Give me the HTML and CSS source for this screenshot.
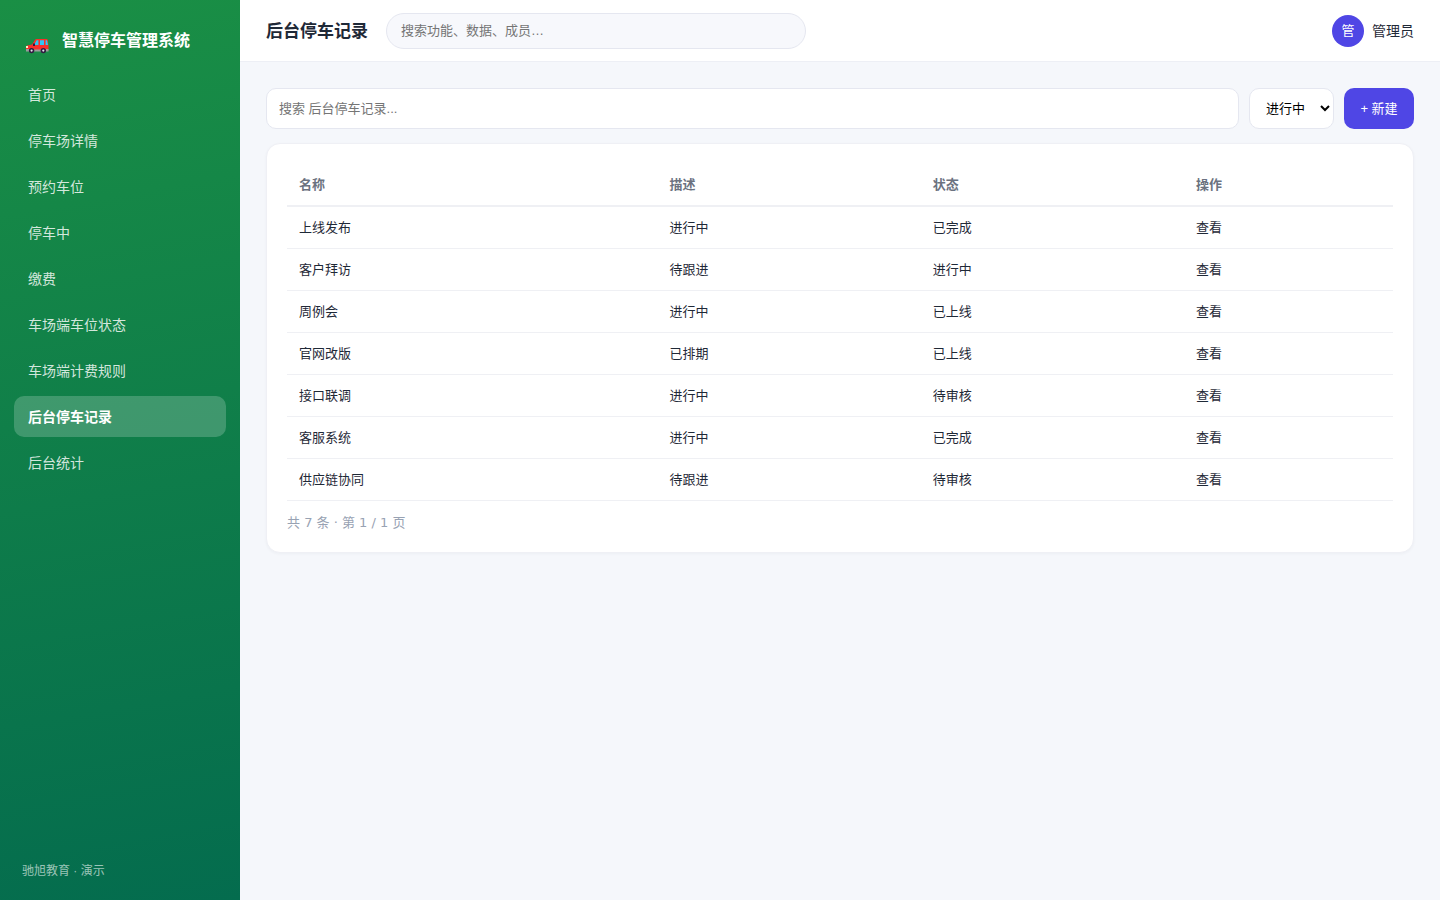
FILE: index.html
```html
<!DOCTYPE html>
<html lang="zh-CN">
<head>
<meta charset="utf-8">
<title>后台停车记录 - 智慧停车管理系统</title>
<link rel="stylesheet" href="styles.css">
</head>
<body>
<div class="app">
  <aside class="sidebar">
    <div class="brand">
      <svg class="brand-icon" viewBox="0 0 24 16" aria-hidden="true">
        <path fill="#f92f2b" d="M1 7.5 6 6.5 9 1.8Q9.6 1 10.5 1H20.5Q21.5 1 21.8 2L22.5 8V12.5H0V9Z"/>
        <path fill="#31c5f4" d="M8 7 10.6 2.2H12.4V7ZM14 2.2H18V7H14ZM19.6 2.2H21L22 7H19.6Z"/>
        <path fill="#9b9b9b" d="M0 11H3V13.5H0ZM8 11.5H15V13.5H8ZM20 11H22.5V13.5H20Z"/>
        <path fill="#321b41" d="M7 5.5H9V8H7Z"/>
        <path fill="#fff4c8" d="M0 8H2V10H0Z"/>
        <circle cx="5.6" cy="12.6" r="2.7" fill="#321b41"/>
        <circle cx="17.3" cy="12.6" r="2.7" fill="#321b41"/>
        <circle cx="5.6" cy="12.6" r="1.1" fill="#e4e4ea"/>
        <circle cx="17.3" cy="12.6" r="1.1" fill="#e4e4ea"/>
      </svg>
      <span>智慧停车管理系统</span>
    </div>
    <nav class="nav">
      <a class="nav-item" href="#">首页</a>
      <a class="nav-item" href="#">停车场详情</a>
      <a class="nav-item" href="#">预约车位</a>
      <a class="nav-item" href="#">停车中</a>
      <a class="nav-item" href="#">缴费</a>
      <a class="nav-item" href="#">车场端车位状态</a>
      <a class="nav-item" href="#">车场端计费规则</a>
      <a class="nav-item active" href="#" aria-current="page">后台停车记录</a>
      <a class="nav-item" href="#">后台统计</a>
    </nav>
    <div class="sidebar-foot">驰旭教育 · 演示</div>
  </aside>
  <div class="main">
    <header class="topbar">
      <h1 class="title">后台停车记录</h1>
      <input class="global-search" type="search" aria-label="全局搜索" placeholder="搜索功能、数据、成员…">
      <div class="user"><span class="avatar">管</span><span class="user-name">管理员</span></div>
    </header>
    <main class="content">
      <div class="toolbar">
        <input class="search" type="text" aria-label="搜索后台停车记录" placeholder="搜索 后台停车记录...">
        <select class="filter" aria-label="状态筛选">
          <option>进行中</option>
          <option>已完成</option>
        </select>
        <button class="create" type="button">+ 新建</button>
      </div>
      <section class="card">
        <table class="table">
          <colgroup><col class="col-name"><col class="col-mid"><col class="col-mid"><col></colgroup>
          <thead><tr><th>名称</th><th>描述</th><th>状态</th><th>操作</th></tr></thead>
          <tbody>
            <tr><td>上线发布</td><td>进行中</td><td>已完成</td><td>查看</td></tr>
            <tr><td>客户拜访</td><td>待跟进</td><td>进行中</td><td>查看</td></tr>
            <tr><td>周例会</td><td>进行中</td><td>已上线</td><td>查看</td></tr>
            <tr><td>官网改版</td><td>已排期</td><td>已上线</td><td>查看</td></tr>
            <tr><td>接口联调</td><td>进行中</td><td>待审核</td><td>查看</td></tr>
            <tr><td>客服系统</td><td>进行中</td><td>已完成</td><td>查看</td></tr>
            <tr><td>供应链协同</td><td>待跟进</td><td>待审核</td><td>查看</td></tr>
          </tbody>
        </table>
        <div class="pager">共 7 条 · 第 1 / 1 页</div>
      </section>
    </main>
  </div>
</div>
</body>
</html>
```
FILE: styles.css
```css
* { box-sizing: border-box; }
body {
  margin: 0;
  background: #f5f7fb;
  color: #1f2937;
  font: 14px/21px "Liberation Sans", "Noto Sans CJK SC", sans-serif;
}
input, select, button { font: inherit; }
.app { display: flex; min-height: 100vh; }
.sidebar {
  flex: 0 0 240px;
  display: flex;
  flex-direction: column;
  padding: 20px 14px;
  color: #fff;
  background: linear-gradient(170deg, #1a8f45, #046c4e);
}
.brand {
  display: flex;
  align-items: center;
  gap: 12px;
  padding: 8px 12px 20px;
  font-size: 16px;
  line-height: 24px;
  font-weight: 700;
}
.brand-icon { width: 24px; height: 16px; margin-top: 10px; }
.nav { display: flex; flex-direction: column; gap: 5px; }
.nav-item {
  padding: 11px 14px 9px;
  border-radius: 10px;
  color: rgba(255, 255, 255, 0.82);
  text-decoration: none;
}
.nav-item.active { background: rgba(255, 255, 255, 0.2); color: #fff; font-weight: 700; }
.sidebar-foot {
  margin-top: auto;
  padding: 0 8px;
  font-size: 12px;
  line-height: 18px;
  color: rgba(255, 255, 255, 0.6);
}
.main { flex: 1; min-width: 0; }
.topbar {
  display: flex;
  align-items: center;
  height: 62px;
  padding: 0 26px;
  background: #fff;
  border-bottom: 1px solid #edeff5;
}
.title { margin: 0; padding-top: 2px; font-size: 17px; line-height: 26px; font-weight: 700; }
.global-search {
  width: 420px;
  height: 36px;
  margin-left: 18px;
  padding: 0 14px;
  border: 1px solid #e5e7f0;
  border-radius: 18px;
  background: #f7f8fc;
  font-size: 13px;
}
.user { display: flex; align-items: center; gap: 8px; margin-left: auto; }
.user-name { padding-top: 2px; }
.avatar {
  width: 32px;
  border-radius: 50%;
  background: #4f46e5;
  color: #fff;
  font-size: 13px;
  line-height: 32px;
  text-align: center;
}
.content { padding: 26px; }
.toolbar { display: flex; gap: 10px; margin-bottom: 14px; font-size: 13px; }
.search, .filter {
  height: 41px;
  border: 1px solid #e5e7f0;
  border-radius: 10px;
  background: #fff;
}
.search { flex: 1; min-width: 0; padding: 0 12px; }
.filter { width: 85px; padding: 0 0 0 12px; color: #000; }
.create {
  width: 70px;
  border: 0;
  border-radius: 10px;
  background: #4f46e5;
  color: #fff;
}
.search::placeholder, .global-search::placeholder { color: #757575; }
.card {
  padding: 20px;
  border: 1px solid #eff0f5;
  border-radius: 14px;
  background: #fff;
  box-shadow: 0 1px 3px rgba(31, 41, 85, 0.04);
  font-size: 13px;
  line-height: 19px;
}
.table { width: 100%; table-layout: fixed; border-spacing: 0; }
.col-name { width: 33.5%; }
.col-mid { width: 23.8%; }
.table th, .table td { padding: 11px 12px; text-align: left; border-bottom: 1px solid #eff0f4; }
.table th { border-bottom-width: 2px; color: #6b7280; font-weight: 700; }
.pager { margin-top: 12px; color: #98a2b3; font-family: "DejaVu Sans", "Noto Sans CJK SC", sans-serif; }
```
